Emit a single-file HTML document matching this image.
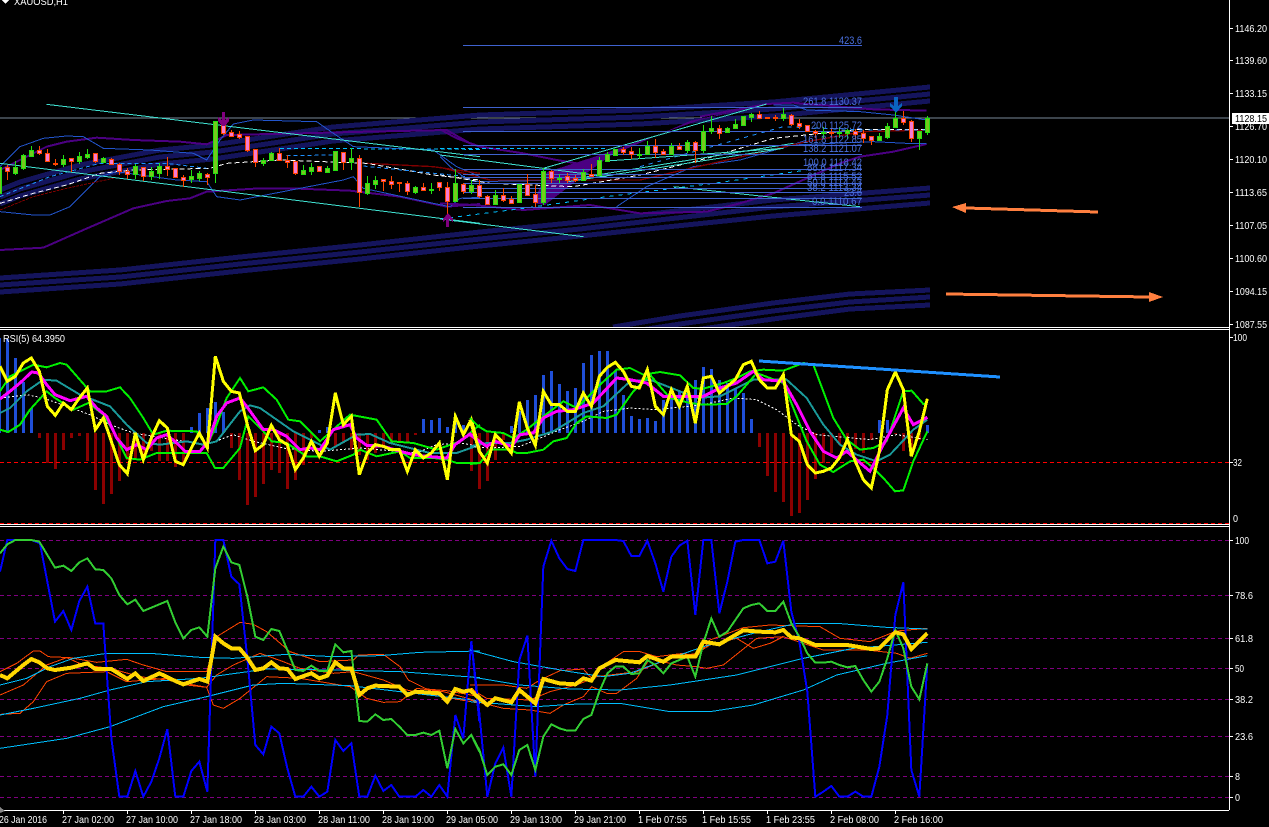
<!DOCTYPE html>
<html><head><meta charset="utf-8"><style>
html,body{margin:0;padding:0;background:#000;width:1269px;height:827px;overflow:hidden}
svg{display:block}
text{font-family:"Liberation Sans",sans-serif;font-size:10.5px;fill:#fff}
.f text{fill:#4a70e0;font-size:11px}
.l{fill:none}
</style></head><body>
<svg width="1269" height="827" viewBox="0 0 1269 827" shape-rendering="crispEdges">
<defs><clipPath id="m"><rect x="0" y="0" width="1229" height="327"/></clipPath></defs>
<rect width="1269" height="827" fill="#000"/>

<!-- main chart -->
<g clip-path="url(#m)">
<path d="M0 118H1229" stroke="#778899" class="l"/>
<g class="l" stroke="#14145c" stroke-width="5">
<path d="M0 190L20 182 80 165 160 150 213 145 333 127 480 115 640 110 773 102 930 87"/>
<path d="M0 197L20 189 80 172 160 157 213 152 333 134 480 122 640 117 773 109 930 94"/>
<path d="M0 204L20 196 80 179 160 164 213 159 333 141 480 129 640 124 773 116 930 101"/>
<path d="M0 278L120 270 240 257 360 245 480 232 580 222 773 200 930 188"/>
<path d="M0 285L120 277 240 264 360 252 480 239 580 229 773 207 930 195"/>
<path d="M0 292L120 284 240 271 360 259 480 246 580 236 773 216 930 203"/>
<path d="M613 327L680 316 773 303 850 294 930 290"/>
<path d="M628 332L680 324 773 311 850 302 930 297"/>
<path d="M650 336L680 332 773 319 850 309 930 305"/>
</g>
<path d="M533 203L547 172 600 155 700 120 767 104 690 121 610 156 580 178 545 205Z" fill="#4b0082"/>

<g transform="translate(0,0) scale(.33333)" class="l">
<g stroke="#4b0082" stroke-width="6">
<polyline points="0,510 60,480 140,440 200,425 290,413 400,420 540,425 620,433 650,420 680,405 900,400 1100,395 1340,390 1410,430 1440,440"/>
<polyline points="0,750 130,743 250,690 400,625 500,603 570,595 620,575 780,565 870,565 1050,572 1200,590 1340,620 1440,612"/>
</g>
<g stroke="#2255cc" stroke-width="3">
<polyline points="0,500 60,440 130,415 200,408 250,410 310,445 450,450 580,460 620,480 660,420 700,372 760,360 950,365 1000,400 1060,440 1300,450 1370,500 1440,530"/>
<polyline points="0,635 100,645 150,645 210,620 250,580 300,530 350,515 530,540 620,545 650,590 720,600 900,565 1030,540 1060,530 1090,565 1300,610 1350,620 1380,595 1440,592"/>
</g>
<polyline points="0,630 100,590 200,565 340,535" stroke="#800000" stroke-width="3" stroke-dasharray="9 3"/>
<polyline points="1100,490 1300,500 1440,520" stroke="#800000" stroke-width="4"/>
<polyline points="0,610 100,580 200,555 300,520 400,510 630,505 680,490 840,480 1100,490 1300,525 1440,540" stroke="#fff" stroke-width="3" stroke-dasharray="15 9"/>
<polyline points="0,590 150,530 300,490 500,490 620,505" stroke="#1e90ff" stroke-width="3" stroke-dasharray="12 9"/>
<polyline points="840,445 1440,448" stroke="#00bfff" stroke-width="3" stroke-dasharray="12 9"/>
<polyline points="860,467 1000,465" stroke="#1e90ff" stroke-width="3" stroke-dasharray="12 9"/>
<polyline points="1090,498 1400,530" stroke="#1e90ff" stroke-width="3" stroke-dasharray="12 9"/>
<polyline points="140,313 1440,470" stroke="#40e0d0" stroke-width="3"/>
<polyline points="0,490 1440,670" stroke="#40e0d0" stroke-width="3"/>
</g>

<g transform="translate(440,30) scale(.33333)" class="l">
<g stroke="#4b0082" stroke-width="6">
<polyline points="0,298 50,325 120,350 250,370 350,390 440,405"/>
<polyline points="780,260 980,222 1060,218 1100,222 1300,238 1460,242"/>
<polyline points="0,520 100,525 250,540 450,525 600,550 800,545 900,520 1000,490 1100,445 1200,400 1260,380 1360,365 1460,342"/>
</g>
<g stroke="#2255cc" stroke-width="3">
<polyline points="0,380 30,410 70,440 100,455 400,450 520,435"/>
<polyline points="530,530 620,470 760,410 900,390 1040,350 1100,330"/>
<polyline points="1000,225 1060,225 1100,240 1260,245 1360,255 1460,270"/>
<polyline points="1060,345 1300,335 1400,340 1460,340"/>
</g>
<polyline points="0,412 150,450 600,450 1100,335 1270,305 1460,300" stroke="#800000" stroke-width="4"/>
<polyline points="0,435 150,460 400,470 600,435 800,385 1000,325 1260,298 1460,298" stroke="#fff" stroke-width="3" stroke-dasharray="15 9"/>
<polyline points="0,355 500,355" stroke="#00bfff" stroke-width="3" stroke-dasharray="12 9"/>
<polyline points="0,567 250,535 500,500 820,460 1100,420" stroke="#00bfff" stroke-width="3" stroke-dasharray="12 15"/>
<polyline points="600,410 1030,290 1270,300 1460,300" stroke="#1e90ff" stroke-width="3" stroke-dasharray="12 15"/>
<g stroke="#40e0d0" stroke-width="3">
<polyline points="0,375 310,415 500,440"/>
<polyline points="310,415 980,222"/>
<polyline points="0,567 430,620"/>
<polyline points="500,393 1030,355"/>
<polyline points="385,455 1030,355"/>
<polyline points="440,440 1060,340"/>
<polyline points="700,470 1260,530"/>
</g>
</g>

<path d="M463 45.5H862M463 107.5H862M463 131.5H862M463 145.5H862M463 154.5H862M463 169.5H862M463 174.5H862M463 177.5H862M463 183.5H862M463 188.5H862M463 192.5H862M463 198.5H862M463 207.5H862" stroke="#3f62cf" class="l"/>

<!-- candles -->
<path class="l" stroke="#22e010" d="M15.5 161V175M23.5 154V170M31.5 146V157M63.5 155V167M79.5 152V164M87.5 149V159M103.5 157V163M135.5 164V179M151.5 167V180M159.5 163V179M191.5 170V183M199.5 171V181M215.5 121V183M263.5 158V166M271.5 152V161M303.5 165V175M311.5 163V175M327.5 166V173M351.5 148V170M367.5 176V195M375.5 176V189M415.5 186V194M431.5 183V194M455.5 169V202M471.5 180V194M495.5 190V205M543.5 168V205M559.5 174V183M583.5 169V180M599.5 157V176M607.5 152V161M639.5 148V159M647.5 141V155M671.5 143V155M687.5 140V153M703.5 125V153M711.5 116V134M727.5 127V132M735.5 119V129M751.5 113V122M783.5 108V121M823.5 127V138M839.5 127V138M847.5 129V139M879.5 133V141M887.5 123V139M895.5 105V127M919.5 131V150M927.5 116V135"/>
<path fill="#76c81e" stroke="#22e010" d="M-2.5 167.5h4v26h-4zM13.5 167.5h4v6h-4zM21.5 155.5h4v13h-4zM29.5 150.5h4v6h-4zM61.5 159.5h4v5h-4zM77.5 156.5h4v5h-4zM85.5 154.5h4v3h-4zM101.5 158.5h4v4h-4zM133.5 166.5h4v8h-4zM149.5 171.5h4v5h-4zM157.5 166.5h4v7h-4zM189.5 176.5h4v3h-4zM197.5 173.5h4v5h-4zM213.5 121.5h4v52h-4zM261.5 160.5h4v3h-4zM269.5 153.5h4v7h-4zM301.5 170.5h4v4h-4zM309.5 167.5h4v4h-4zM325.5 168.5h4v4h-4zM333.5 151.5h4v19h-4zM349.5 158.5h4v4h-4zM365.5 183.5h4v10h-4zM373.5 180.5h4v4h-4zM413.5 187.5h4v5h-4zM429.5 189.5h4v1h-4zM453.5 183.5h4v18h-4zM469.5 185.5h4v6h-4zM493.5 195.5h4v9h-4zM517.5 184.5h4v18h-4zM541.5 171.5h4v31h-4zM557.5 178.5h4v1h-4zM581.5 172.5h4v8h-4zM597.5 160.5h4v15h-4zM605.5 154.5h4v7h-4zM613.5 149.5h4v6h-4zM637.5 154.5h4v1h-4zM645.5 146.5h4v8h-4zM669.5 146.5h4v8h-4zM685.5 142.5h4v8h-4zM701.5 131.5h4v19h-4zM709.5 128.5h4v3h-4zM725.5 128.5h4v4h-4zM733.5 124.5h4v4h-4zM741.5 116.5h4v9h-4zM749.5 114.5h4v3h-4zM781.5 114.5h4v4h-4zM821.5 132.5h4v1h-4zM837.5 132.5h4v1h-4zM845.5 130.5h4v3h-4zM877.5 136.5h4v4h-4zM885.5 126.5h4v11h-4zM893.5 118.5h4v9h-4zM917.5 131.5h4v7h-4zM925.5 118.5h4v14h-4z"/>
<path class="l" stroke="#ff4500" d="M7.5 165V180M39.5 146V155M47.5 149V161M55.5 159V166M71.5 158V172M95.5 153V163M111.5 158V165M119.5 163V175M127.5 168V179M143.5 167V181M167.5 157V176M175.5 168V178M183.5 175V187M207.5 173V185M223.5 118V135M231.5 130V137M239.5 131V139M247.5 136V152M255.5 149V167M279.5 148V161M287.5 155V168M295.5 161V175M343.5 152V170M359.5 155V207M383.5 179V191M391.5 176V189M399.5 182V192M407.5 181V195M423.5 183V191M439.5 182V191M447.5 182V222M463.5 183V194M479.5 180V198M487.5 195V205M503.5 188V202M511.5 196V204M527.5 174V196M535.5 185V207M551.5 170V183M567.5 173V183M575.5 175V182M591.5 164V177M623.5 147V155M631.5 147V159M655.5 139V158M663.5 149V155M679.5 143V150M695.5 141V163M719.5 125V139M759.5 111V118M775.5 115V121M791.5 114V126M799.5 119V129M815.5 130V138M831.5 128V137M855.5 129V139M863.5 130V143M871.5 136V145M903.5 111V125M911.5 120V142"/>
<path fill="#f57ad0" stroke="#ff4500" d="M5.5 167.5h4v4h-4zM37.5 150.5h4v3h-4zM45.5 153.5h4v8h-4zM53.5 163.5h4v1h-4zM69.5 158.5h4v3h-4zM93.5 153.5h4v8h-4zM109.5 159.5h4v5h-4zM117.5 164.5h4v7h-4zM125.5 171.5h4v3h-4zM141.5 167.5h4v9h-4zM165.5 166.5h4v3h-4zM173.5 168.5h4v9h-4zM181.5 177.5h4v3h-4zM205.5 174.5h4v3h-4zM221.5 122.5h4v11h-4zM229.5 132.5h4v4h-4zM237.5 134.5h4v3h-4zM245.5 136.5h4v14h-4zM253.5 149.5h4v13h-4zM277.5 153.5h4v7h-4zM285.5 160.5h4v2h-4zM293.5 161.5h4v12h-4zM317.5 166.5h4v5h-4zM341.5 152.5h4v10h-4zM357.5 158.5h4v34h-4zM381.5 179.5h4v2h-4zM389.5 181.5h4v3h-4zM397.5 182.5h4v1h-4zM405.5 183.5h4v8h-4zM421.5 187.5h4v3h-4zM437.5 182.5h4v5h-4zM445.5 187.5h4v14h-4zM461.5 184.5h4v7h-4zM477.5 185.5h4v11h-4zM485.5 196.5h4v8h-4zM501.5 195.5h4v5h-4zM509.5 199.5h4v4h-4zM525.5 184.5h4v11h-4zM533.5 194.5h4v8h-4zM549.5 171.5h4v7h-4zM565.5 176.5h4v4h-4zM573.5 178.5h4v2h-4zM589.5 174.5h4v2h-4zM621.5 149.5h4v3h-4zM629.5 151.5h4v3h-4zM653.5 146.5h4v6h-4zM661.5 151.5h4v3h-4zM677.5 146.5h4v3h-4zM693.5 142.5h4v8h-4zM717.5 128.5h4v5h-4zM757.5 114.5h4v4h-4zM765.5 117.5h4v1h-4zM773.5 117.5h4v1h-4zM789.5 115.5h4v9h-4zM797.5 123.5h4v3h-4zM805.5 125.5h4v6h-4zM813.5 131.5h4v2h-4zM829.5 132.5h4v1h-4zM853.5 131.5h4v3h-4zM861.5 133.5h4v5h-4zM869.5 136.5h4v4h-4zM901.5 118.5h4v4h-4zM909.5 121.5h4v17h-4z"/>

<g class="f">
<text x="839" y="44" textLength="23" lengthAdjust="spacingAndGlyphs">423.6</text>
<text x="803" y="105" textLength="59" lengthAdjust="spacingAndGlyphs">261.8  1130.37</text>
<text x="811" y="129" textLength="51" lengthAdjust="spacingAndGlyphs">200  1125.72</text>
<text x="803" y="143" textLength="59" lengthAdjust="spacingAndGlyphs">161.8  1122.85</text>
<text x="803" y="152" textLength="59" lengthAdjust="spacingAndGlyphs">138.2  1121.07</text>
<text x="803" y="166" textLength="59" lengthAdjust="spacingAndGlyphs">100.0  1118.42</text>
<text x="807" y="171" textLength="55" lengthAdjust="spacingAndGlyphs">88.6  1117.34</text>
<text x="807" y="180" textLength="55" lengthAdjust="spacingAndGlyphs">61.8  1115.52</text>
<text x="807" y="186" textLength="55" lengthAdjust="spacingAndGlyphs">50.0  1114.43</text>
<text x="807" y="191" textLength="55" lengthAdjust="spacingAndGlyphs">38.2  1113.34</text>
<text x="844" y="196" textLength="18" lengthAdjust="spacingAndGlyphs">23.6</text>
<text x="812" y="205" textLength="50" lengthAdjust="spacingAndGlyphs">0.0  1110.67</text>
</g>

<!-- signal arrows -->
<path d="M222 112h3v8l4-3v4l-4 5h-3l-4-5v-4l4 3z" fill="#800080"/>
<path d="M446 227h3v-8l4 3v-3l-5-6-5 6v3l3-3z" fill="#800080"/>
<path d="M894 97h4v9l4-3v3l-6 7-6-7v-3l4 3z" fill="#0a64c0"/>
<path d="M1098 212L966 208" stroke="#ff7f3f" stroke-width="3" class="l"/>
<path d="M952 207L966 203V213Z" fill="#ff7f3f"/>
<path d="M946 294L1150 297" stroke="#ff7f3f" stroke-width="3" class="l"/>
<path d="M1163 297L1149 292V302Z" fill="#ff7f3f"/>
</g>

<!-- RSI panel -->
<path class="l" stroke="#1f4fd8" stroke-width="3" d="M-.5 433V338M7.5 433V339M15.5 433V358M23.5 433V382M31.5 433V408M191.5 433V427M199.5 433V413M207.5 433V408M215.5 433V402M223.5 433V412M319.5 433V430M327.5 433V427M423.5 433V419M431.5 433V420M439.5 433V418M447.5 433V427M455.5 433V415M463.5 433V425M511.5 433V426M519.5 433V411M527.5 433V400M535.5 433V395M543.5 433V375M551.5 433V371M559.5 433V384M567.5 433V391M575.5 433V388M583.5 433V363M591.5 433V355M599.5 433V351M607.5 433V351M615.5 433V371M623.5 433V395M631.5 433V416M639.5 433V419M647.5 433V418M655.5 433V421M663.5 433V400M671.5 433V396M679.5 433V391M687.5 433V393M695.5 433V380M703.5 433V367M711.5 433V369M719.5 433V380M727.5 433V383M735.5 433V388M743.5 433V393M751.5 433V419M879.5 433V420M887.5 433V420M927.5 433V425"/>
<path class="l" stroke="#8b0000" stroke-width="3" d="M39.5 433V438M47.5 433V463M55.5 433V469M63.5 433V450M71.5 433V438M79.5 433V436M87.5 433V461M95.5 433V490M103.5 433V504M111.5 433V494M119.5 433V481M127.5 433V460M135.5 433V458M143.5 433V456M151.5 433V451M159.5 433V461M167.5 433V461M175.5 433V467M183.5 433V465M231.5 433V448M239.5 433V480M247.5 433V505M255.5 433V497M263.5 433V484M271.5 433V470M279.5 433V473M287.5 433V489M295.5 433V480M303.5 433V465M311.5 433V438M335.5 433V446M343.5 433V443M351.5 433V450M359.5 433V455M367.5 433V460M375.5 433V453M383.5 433V445M391.5 433V443M399.5 433V441M407.5 433V443M415.5 433V435M471.5 433V471M479.5 433V489M487.5 433V481M495.5 433V460M503.5 433V440M759.5 433V447M767.5 433V476M775.5 433V492M783.5 433V502M791.5 433V516M799.5 433V513M807.5 433V500M815.5 433V479M823.5 433V463M831.5 433V453M839.5 433V445M847.5 433V441M855.5 433V449M863.5 433V453M871.5 433V440M895.5 433V434M903.5 433V451M911.5 433V456M919.5 433V440"/>
<path d="M0 462.5H1229" stroke="#f00" stroke-dasharray="4 3" class="l"/>
<path d="M0 523.5H1229" stroke="#f00" stroke-dasharray="4 3" class="l"/>

<g transform="translate(0,328) scale(.33333)" class="l">
<polyline points="0,210 80,200 130,210 200,235 270,260 330,290 400,315 520,335 620,350 700,320 760,340 860,362 960,370 1080,360 1250,375 1310,350 1380,345 1440,355" stroke="#fff" stroke-width="3" stroke-dasharray="6 6"/>
<polyline points="0,255 30,240 80,190 130,155 170,158 240,200 330,235 380,290 440,345 480,350 560,340 610,350 650,340 720,250 750,232 780,240 880,310 990,365 1070,320 1110,318 1170,345 1290,375 1370,375 1440,350" stroke="#1a9a9a" stroke-width="6"/>
<g stroke="#00f000" stroke-width="6">
<polyline points="0,190 30,145 100,110 140,118 180,105 200,110 270,190 320,190 360,178 390,210 430,270 460,320 500,308 590,310 620,355 650,290 680,210 720,150 745,190 790,178 830,215 865,275 900,280 960,340 1050,260 1130,275 1175,340 1240,345 1310,365 1380,340 1440,290"/>
<polyline points="0,305 25,312 60,290 90,245 140,190 165,210 220,245 265,225 310,260 340,310 380,390 420,395 470,375 540,375 620,375 645,420 670,420 720,360 745,265 790,310 815,340 860,345 920,385 960,385 1010,400 1060,380 1080,365 1130,385 1200,370 1230,390 1300,390 1340,395 1370,405 1440,405"/>
</g>
<polyline points="0,213 30,190 60,165 95,132 115,135 140,170 165,200 210,218 260,205 290,240 320,265 350,330 380,365 410,350 440,365 470,330 500,320 530,345 555,370 600,370 625,340 650,265 680,225 720,210 740,235 790,305 820,305 860,325 900,365 930,360 960,365 1000,305 1050,290 1070,330 1100,352 1150,355 1200,370 1240,380 1280,385 1340,390 1365,350 1410,318 1440,345" stroke="#ff00ff" stroke-width="9"/>
<polyline points="0,115 22,160 46,145 70,105 94,90 118,130 142,235 166,262 190,225 214,245 238,210 262,180 286,305 310,270 334,340 358,410 382,437 406,315 430,395 454,330 478,278 502,300 526,400 550,410 574,360 598,315 622,360 646,85 670,160 694,190 718,195 742,290 766,368 790,350 814,292 838,335 862,350 886,425 910,390 934,340 958,385 982,345 1006,195 1030,290 1054,265 1078,440 1102,375 1126,350 1150,355 1174,365 1198,365 1222,430 1246,365 1270,390 1294,375 1318,345 1342,455 1366,265 1390,320 1414,275 1438,365" stroke="#ffff00" stroke-width="9"/>
</g>
<g transform="translate(470,328) scale(.33333)" class="l">
<polyline points="0,355 60,360 150,355 200,335 270,305 340,280 400,250 480,240 560,245 700,230 790,210 860,215 920,245 980,290 1040,320 1200,335 1280,320 1372,335" stroke="#fff" stroke-width="3" stroke-dasharray="6 6"/>
<polyline points="0,355 50,345 120,345 170,335 250,310 340,255 400,235 480,160 540,155 630,190 680,210 750,205 850,155 950,155 1010,210 1060,290 1110,350 1160,380 1220,400 1260,380 1330,305 1372,275" stroke="#1a9a9a" stroke-width="6"/>
<g stroke="#00f000" stroke-width="6">
<polyline points="0,270 25,295 50,310 100,315 130,330 170,305 220,265 280,220 320,240 390,170 440,125 480,120 520,140 570,132 630,142 670,180 700,182 760,165 800,150 840,130 880,125 940,128 1000,105 1030,110 1090,270 1130,335 1170,365 1210,360 1250,340 1300,190 1325,188 1360,228 1372,225"/>
<polyline points="0,408 30,405 60,365 120,365 140,375 170,375 220,365 250,340 290,330 320,285 350,265 410,270 440,260 490,190 540,140 600,210 660,225 700,230 770,228 800,205 860,135 940,165 1010,340 1050,410 1090,432 1140,400 1180,395 1210,420 1240,450 1275,490 1300,487 1330,400 1372,310"/>
</g>
<polyline points="0,320 50,355 75,340 125,355 150,320 190,315 220,270 260,250 310,245 370,225 440,150 480,155 530,165 580,205 640,205 700,205 750,180 800,165 850,130 880,155 940,160 980,230 1020,310 1060,370 1100,390 1130,370 1200,430 1240,350 1300,240 1330,290 1372,268" stroke="#ff00ff" stroke-width="9"/>
<polyline points="0,275 28,370 52,405 76,320 100,345 124,375 148,222 172,300 196,352 220,190 244,230 268,230 292,250 316,250 340,195 364,235 388,145 412,118 436,103 460,130 484,175 508,180 532,125 556,235 580,260 604,185 628,235 652,175 676,285 700,150 724,145 748,195 772,175 796,155 820,110 844,100 868,155 892,180 916,180 940,140 964,320 988,340 1012,410 1036,435 1060,430 1084,420 1108,390 1132,335 1156,400 1180,455 1204,480 1228,370 1252,185 1276,132 1300,185 1324,385 1348,310 1372,212" stroke="#ffff00" stroke-width="9"/>
</g>
<path d="M759 361L1000 377" stroke="#1e90ff" stroke-width="3" class="l"/>

<!-- third panel -->
<path d="M0 540.5H1229M0 595.5H1229M0 638.5H1229M0 668.5H1229M0 699.5H1229M0 736.5H1229M0 776.5H1229M0 797.5H1229" stroke="#800080" stroke-dasharray="4 3" class="l"/>

<g transform="translate(0,525) scale(.33333)" class="l">
<g stroke="#ff4500" stroke-width="3">
<polyline points="0,440 50,415 100,378 120,378 145,395 210,398 290,412 380,403 430,420 500,440 580,440 620,440 650,335 720,292 760,298 800,320 870,380 960,410 1000,408 1060,405 1075,390 1150,388 1200,425 1225,465 1280,492 1340,497 1440,515"/>
<polyline points="0,510 70,480 140,420 200,398 250,420 330,430 420,455 500,465 620,487 650,450 700,420 780,385 850,410 900,430 1000,445 1060,440 1150,465 1220,495 1300,510 1440,535"/>
<polyline points="0,568 60,565 100,530 140,470 200,445 320,440 380,470 500,460 560,480 620,487 640,540 670,550 720,520 800,455 900,460 1050,485 1100,520 1150,532 1200,530 1250,490 1330,500 1440,530"/>
</g>
<g stroke="#00bfff" stroke-width="3">
<polyline points="0,480 80,460 150,425 220,400 320,385 450,385 600,397 700,400 860,388 1000,395 1140,392 1260,382 1440,378"/>
<polyline points="0,570 100,550 240,520 330,495 440,470 600,460 800,432 1000,435 1200,440 1440,458"/>
<polyline points="0,670 200,640 330,605 490,545 620,515 760,480 850,475 1050,482 1200,500 1440,528"/>
</g>
<polyline points="0,140 22,45 46,45 94,45 120,55 165,290 190,258 214,315 238,228 262,185 286,296 310,296 334,640 358,815 382,815 406,738 430,815 454,770 478,700 502,612 526,815 550,815 574,738 598,710 622,800 646,45 670,45 694,155 718,178 742,400 766,660 790,688 814,605 838,625 862,730 886,815 910,815 934,785 958,815 982,800 1006,645 1030,678 1054,655 1078,815 1102,815 1126,752 1150,798 1174,780 1198,815 1246,815 1270,795 1294,815 1318,780 1342,815 1366,570 1390,640 1414,348 1438,590" stroke="#0000ff" stroke-width="6"/>
<polyline points="0,85 22,58 46,45 94,45 118,50 165,128 190,122 214,138 238,112 262,100 286,133 310,135 334,160 358,210 382,238 406,224 430,258 502,228 526,292 550,340 574,315 598,307 622,335 646,130 670,65 694,112 718,120 742,215 766,335 790,345 814,312 838,318 862,375 886,435 910,438 934,422 958,438 982,438 1006,358 1030,382 1054,378 1078,588 1102,590 1126,568 1150,585 1174,582 1198,605 1222,630 1246,630 1270,623 1294,630 1318,617 1342,730 1366,612 1390,655 1414,630 1438,680" stroke="#32cd32" stroke-width="6"/>
<polyline points="0,450 22,460 46,440 70,420 94,402 118,412 142,430 165,435 214,428 262,415 286,432 334,432 382,462 406,445 430,468 478,445 526,468 550,478 598,462 622,470 646,335 670,355 694,370 718,370 742,398 766,435 790,430 814,412 838,430 862,432 886,462 934,445 958,460 982,452 1006,412 1030,430 1054,430 1078,510 1102,490 1126,482 1198,485 1222,510 1246,500 1318,505 1342,530 1366,492 1390,500 1414,495 1440,520" stroke="#ffd700" stroke-width="12"/>
</g>
<g transform="translate(470,525) scale(.33333)" class="l">
<g stroke="#ff4500" stroke-width="3">
<polyline points="0,480 100,480 170,490 210,465 270,437 340,432 365,460 400,420 460,380 510,380 560,395 640,385 680,395 720,345 820,308 900,300 1050,305 1110,340 1200,350 1280,318 1372,310"/>
<polyline points="0,525 100,550 180,555 240,565 280,540 340,515 365,485 410,505 440,505 500,460 540,400 620,420 680,425 710,430 760,420 860,340 940,335 1060,375 1190,375 1280,385 1320,400 1372,385"/>
<polyline points="0,490 50,520 180,525 240,500 320,480 380,455 500,440 600,400 680,385 720,360 800,340 850,370 900,355 940,335"/>
</g>
<g stroke="#00bfff" stroke-width="3">
<polyline points="0,375 130,410 300,440 400,455 480,445 600,400 700,365 850,325 980,295 1100,295 1250,307 1372,312"/>
<polyline points="0,455 150,480 300,492 450,495 600,480 800,450 1000,400 1150,370 1372,352"/>
<polyline points="0,530 200,545 300,538 450,535 600,560 720,560 850,540 1000,495 1100,450 1250,415 1372,392"/>
</g>
<polyline points="4,348 28,565 52,815 76,715 100,668 124,815 148,405 172,332 196,755 220,125 244,47 268,100 292,132 316,138 340,45 436,45 460,48 484,93 508,93 532,47 556,115 580,200 604,95 628,62 652,47 676,270 700,45 724,45 748,265 772,170 796,50 820,45 868,45 892,115 916,110 940,47 964,260 988,350 1012,500 1036,815 1060,800 1084,783 1108,815 1132,815 1156,800 1180,815 1204,815 1228,725 1252,570 1276,270 1300,172 1324,735 1348,815 1372,415" stroke="#0000ff" stroke-width="6"/>
<polyline points="4,630 28,675 52,750 76,725 100,718 124,750 148,675 172,660 196,735 220,635 244,598 268,610 292,617 316,617 340,582 364,570 388,500 412,445 436,425 460,425 484,447 508,445 532,405 556,420 580,445 604,415 628,405 652,395 676,455 700,355 724,280 748,335 772,320 820,250 844,240 868,235 892,258 916,258 940,230 964,295 988,335 1012,385 1036,413 1060,413 1084,410 1108,420 1132,427 1156,423 1180,465 1204,500 1228,470 1252,400 1276,315 1300,370 1324,485 1348,523 1372,415" stroke="#32cd32" stroke-width="6"/>
<polyline points="0,495 28,520 52,540 76,520 124,532 148,495 196,535 220,462 268,475 316,478 340,460 364,467 388,430 436,405 508,412 532,393 580,410 604,395 676,395 700,350 748,358 820,316 868,320 916,322 940,315 964,337 988,340 1036,360 1132,360 1204,372 1228,370 1276,322 1300,328 1324,372 1372,325" stroke="#ffd700" stroke-width="12"/>
</g>

<!-- frames -->
<path class="l" stroke="#fff" d="M0 327.5H1229M0 329.5H1229M0 524.5H1229M0 526.5H1229M0 810.5H1229M1229.5 0V810"/>
<path class="l" stroke="#fff" d="M1230 28.5h3M1230 60.5h3M1230 93.5h3M1230 126.5h3M1230 159.5h3M1230 192.5h3M1230 225.5h3M1230 258.5h3M1230 291.5h3M1230 324.5h3M1230 337.5h3M1230 462.5h3M1230 540.5h3M1230 595.5h3M1230 638.5h3M1230 668.5h3M1230 699.5h3M1230 736.5h3M1230 776.5h3M1230 797.5h3M63.5 811v3M127.5 811v3M191.5 811v3M255.5 811v3M319.5 811v3M383.5 811v3M447.5 811v3M511.5 811v3M575.5 811v3M639.5 811v3M703.5 811v3M767.5 811v3M831.5 811v3M895.5 811v3"/>

<!-- title -->
<path d="M2 0H9L5.5 4Z" fill="#fff"/>
<text x="14" y="5" textLength="54" lengthAdjust="spacingAndGlyphs">XAUOSD,H1</text>
<text x="3" y="342" textLength="62" lengthAdjust="spacingAndGlyphs">RSI(5) 64.3950</text>

<!-- price axis -->
<text x="1235" y="32" textLength="32" lengthAdjust="spacingAndGlyphs">1146.20</text>
<text x="1235" y="64" textLength="32" lengthAdjust="spacingAndGlyphs">1139.60</text>
<text x="1235" y="97" textLength="32" lengthAdjust="spacingAndGlyphs">1133.15</text>
<text x="1235" y="130" textLength="32" lengthAdjust="spacingAndGlyphs">1126.70</text>
<text x="1235" y="163" textLength="32" lengthAdjust="spacingAndGlyphs">1120.10</text>
<text x="1235" y="196" textLength="32" lengthAdjust="spacingAndGlyphs">1113.65</text>
<text x="1235" y="229" textLength="32" lengthAdjust="spacingAndGlyphs">1107.05</text>
<text x="1235" y="262" textLength="32" lengthAdjust="spacingAndGlyphs">1100.60</text>
<text x="1235" y="295" textLength="32" lengthAdjust="spacingAndGlyphs">1094.15</text>
<text x="1235" y="328" textLength="32" lengthAdjust="spacingAndGlyphs">1087.55</text>
<rect x="1232" y="113" width="37" height="11" fill="#fff"/>
<text x="1235" y="122" textLength="32" lengthAdjust="spacingAndGlyphs" style="fill:#000">1128.15</text>
<text x="1233" y="341" textLength="14" lengthAdjust="spacingAndGlyphs">100</text>
<text x="1233" y="466" textLength="9" lengthAdjust="spacingAndGlyphs">32</text>
<text x="1233" y="522" textLength="5" lengthAdjust="spacingAndGlyphs">0</text>
<text x="1235" y="544" textLength="14" lengthAdjust="spacingAndGlyphs">100</text>
<text x="1235" y="599" textLength="18" lengthAdjust="spacingAndGlyphs">78.6</text>
<text x="1235" y="642" textLength="18" lengthAdjust="spacingAndGlyphs">61.8</text>
<text x="1235" y="672" textLength="9" lengthAdjust="spacingAndGlyphs">50</text>
<text x="1235" y="703" textLength="18" lengthAdjust="spacingAndGlyphs">38.2</text>
<text x="1235" y="740" textLength="18" lengthAdjust="spacingAndGlyphs">23.6</text>
<text x="1235" y="780" textLength="5" lengthAdjust="spacingAndGlyphs">8</text>
<text x="1235" y="801" textLength="5" lengthAdjust="spacingAndGlyphs">0</text>

<!-- time axis -->
<text x="-1" y="823" textLength="48" lengthAdjust="spacingAndGlyphs">26 Jan 2016</text>
<text x="62" y="823" textLength="52" lengthAdjust="spacingAndGlyphs">27 Jan 02:00</text>
<text x="126" y="823" textLength="52" lengthAdjust="spacingAndGlyphs">27 Jan 10:00</text>
<text x="190" y="823" textLength="52" lengthAdjust="spacingAndGlyphs">27 Jan 18:00</text>
<text x="254" y="823" textLength="52" lengthAdjust="spacingAndGlyphs">28 Jan 03:00</text>
<text x="318" y="823" textLength="52" lengthAdjust="spacingAndGlyphs">28 Jan 11:00</text>
<text x="382" y="823" textLength="52" lengthAdjust="spacingAndGlyphs">28 Jan 19:00</text>
<text x="446" y="823" textLength="52" lengthAdjust="spacingAndGlyphs">29 Jan 05:00</text>
<text x="510" y="823" textLength="52" lengthAdjust="spacingAndGlyphs">29 Jan 13:00</text>
<text x="574" y="823" textLength="52" lengthAdjust="spacingAndGlyphs">29 Jan 21:00</text>
<text x="638" y="823" textLength="49" lengthAdjust="spacingAndGlyphs">1 Feb 07:55</text>
<text x="702" y="823" textLength="49" lengthAdjust="spacingAndGlyphs">1 Feb 15:55</text>
<text x="766" y="823" textLength="49" lengthAdjust="spacingAndGlyphs">1 Feb 23:55</text>
<text x="830" y="823" textLength="49" lengthAdjust="spacingAndGlyphs">2 Feb 08:00</text>
<text x="894" y="823" textLength="49" lengthAdjust="spacingAndGlyphs">2 Feb 16:00</text>
<path d="M0 807L5 811 0 813Z" fill="#888"/>
</svg>
</body></html>
